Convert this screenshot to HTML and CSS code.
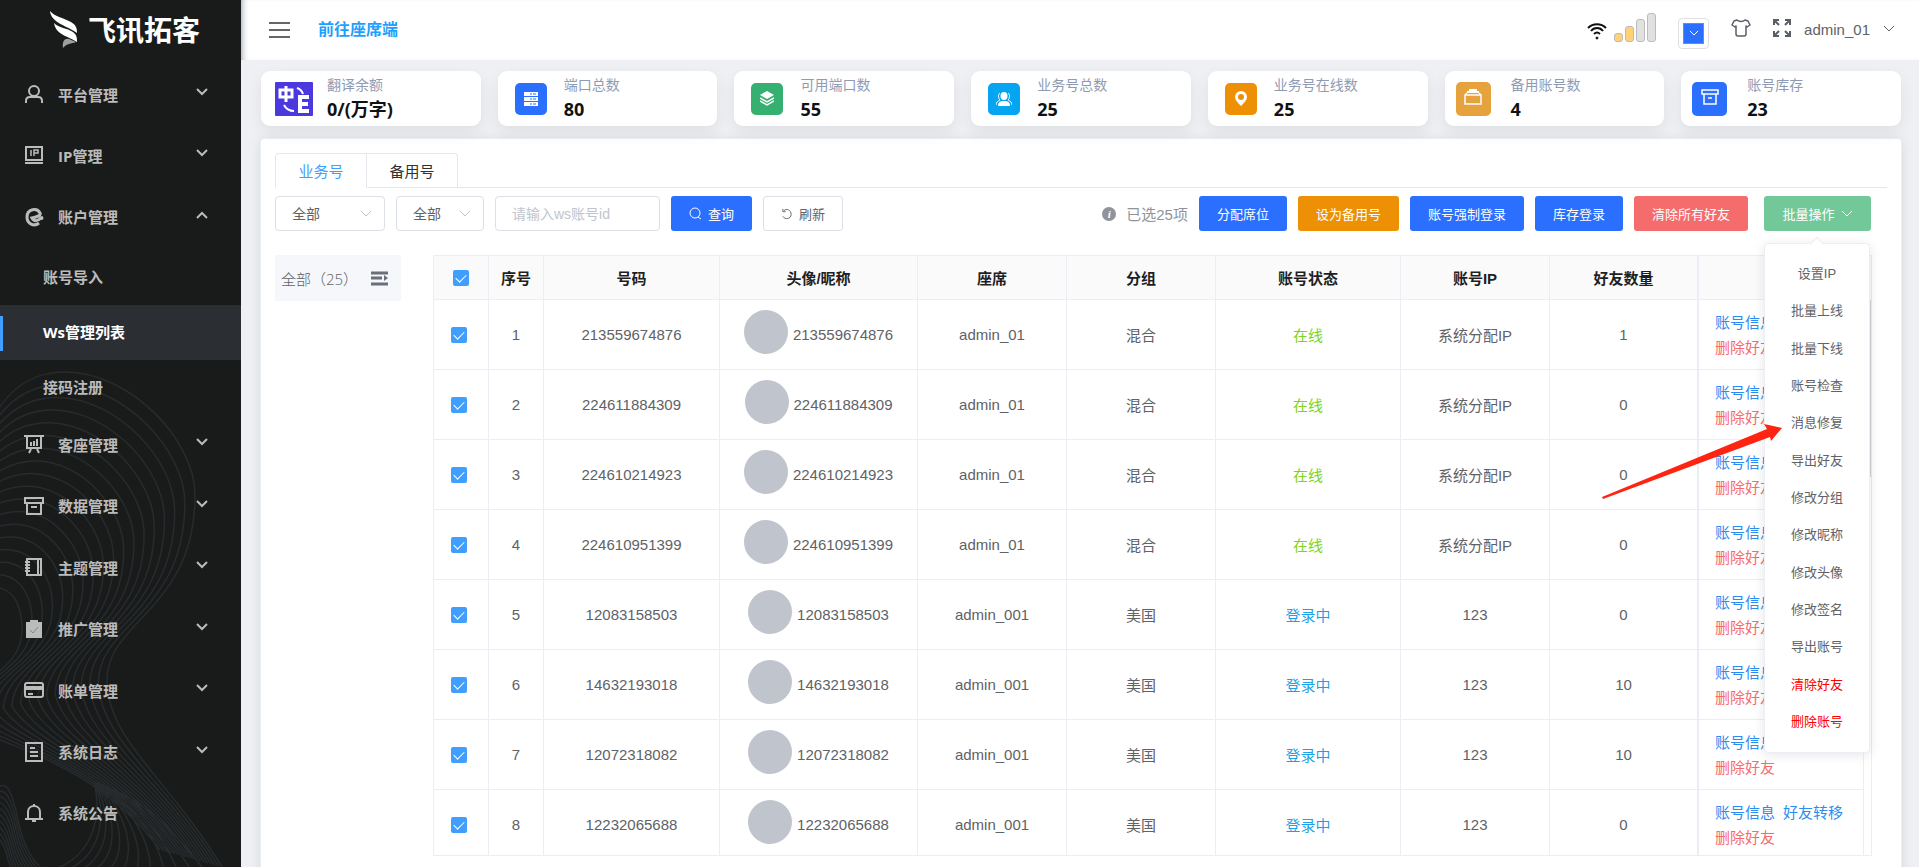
FILE: index.html
```html
<!DOCTYPE html>
<html lang="zh-CN">
<head>
    <meta charset="utf-8">
    <title>Ws管理列表</title>
    <link rel="stylesheet" href="styles.css">
</head>
<body>
    <div class="app">
        <aside class="sidebar">
            <svg class="waves" id="waves" viewBox="0 0 241 867" preserveAspectRatio="xMinYMax slice"></svg>
            <div class="logo">
                <svg width="30" height="38" viewBox="0 0 30 38">
                    <path d="M1 0 C6 6 15 7 22 11 C27 14 28 17 28 22 C19 15 2 12 1 0Z" fill="#fff"/>
                    <path d="M5 12 C10 17 18 17 24 21 C28 24 28 27 28 31 C19 25 7 24 5 12Z" fill="#fff"/>
                    <path d="M14 37 C13 30 16 27 20 28 L27 31 C22 33 18 32 14 37Z" fill="#9d9f9e"/>
                </svg>
                <span>飞讯拓客</span>
            </div>
            <ul class="menu">
                <li><a class="menu-item" href="#">
                    <svg class="icon" viewBox="0 0 20 20"><circle cx="10" cy="7" r="5"/><path d="M2 19v-2c0-3 2-4 4-4h8c2 0 4 1 4 4v2"/></svg>
                    <span>平台管理</span><svg class="arrow" viewBox="0 0 12 8"><path d="M1 1l5 5 5-5"/></svg></a></li>
                <li><a class="menu-item" href="#">
                    <svg class="icon" viewBox="0 0 20 20"><path d="M2 2h16v13H2zM1 18h18"/><path d="M7 5v6M10 11V5h4v3h-4" stroke-width="1.500"/></svg>
                    <span>IP管理</span><svg class="arrow" viewBox="0 0 12 8"><path d="M1 1l5 5 5-5"/></svg></a></li>
                <li class="open"><a class="menu-item" href="#">
                    <svg class="icon" viewBox="0 0 20 20"><path d="M15 16c-5 4-12 1-12-6 0-8 10-10 13-4 1 2-2 4-8 5 2 4 6 3 9 0" stroke-width="3"/><circle cx="17.500" cy="11" r="1"/></svg>
                    <span>账户管理</span><svg class="arrow" viewBox="0 0 12 8"><path d="M1 7l5-5 5 5"/></svg></a>
                    <ul class="submenu">
                        <li><a href="#">账号导入</a></li>
                        <li><a class="active" href="#">Ws管理列表</a></li>
                        <li><a href="#">接码注册</a></li>
                    </ul>
                </li>
                <li><a class="menu-item" href="#">
                    <svg class="icon" viewBox="0 0 20 20"><path d="M0 2h20M3 2v12h14V2M7 8v4M10 7v5M13 5v7M7 15l-2 4M13 15l2 4"/></svg>
                    <span>客座管理</span><svg class="arrow" viewBox="0 0 12 8"><path d="M1 1l5 5 5-5"/></svg></a></li>
                <li><a class="menu-item" href="#">
                    <svg class="icon" viewBox="0 0 20 20"><path d="M1 2h18v5H1zM3 7v11h14V7M7 11h6"/></svg>
                    <span>数据管理</span><svg class="arrow" viewBox="0 0 12 8"><path d="M1 1l5 5 5-5"/></svg></a></li>
                <li><a class="menu-item" href="#">
                    <svg class="icon" viewBox="0 0 20 20"><path d="M3 2h14v16H3zM14 2v16M1 5h5M1 8h5M1 11h5M1 14h5"/></svg>
                    <span>主题管理</span><svg class="arrow" viewBox="0 0 12 8"><path d="M1 1l5 5 5-5"/></svg></a></li>
                <li><a class="menu-item" href="#">
                    <svg class="icon" viewBox="0 0 20 20"><path d="M3 4h14v14H3zM7 2h6v2H7z" fill="#bbb"/><path d="M6 11l3 3 5-6" stroke="#888" stroke-width="1"/></svg>
                    <span>推广管理</span><svg class="arrow" viewBox="0 0 12 8"><path d="M1 1l5 5 5-5"/></svg></a></li>
                <li><a class="menu-item" href="#">
                    <svg class="icon" viewBox="0 0 20 20"><rect x="1" y="3" width="18" height="14" rx="2"/><path d="M2 7h16M2 9h16M4 14h5"/></svg>
                    <span>账单管理</span><svg class="arrow" viewBox="0 0 12 8"><path d="M1 1l5 5 5-5"/></svg></a></li>
                <li><a class="menu-item" href="#">
                    <svg class="icon" viewBox="0 0 20 20"><path d="M2 1h16v18H2zM6 6h5M6 10h8M6 14h8"/></svg>
                    <span>系统日志</span><svg class="arrow" viewBox="0 0 12 8"><path d="M1 1l5 5 5-5"/></svg></a></li>
                <li><a class="menu-item" href="#">
                    <svg class="icon" viewBox="0 0 20 20"><path d="M1 16h18M4 16V9c0-8 12-8 12 0v7M10 1v2M8 18h4"/></svg>
                    <span>系统公告</span></a></li>
            </ul>
        </aside>

        <div class="content">
            <header class="topbar">
                <button class="hamburger" aria-label="折叠菜单"><i></i><i></i><i></i></button>
                <a class="seat-link" href="#">前往座席端</a>
                <div class="topbar-right">
                    <svg class="wifi" width="20" height="18" viewBox="0 0 20 18" fill="none" stroke="#111" stroke-width="2"><path d="M1 6c5-5 13-5 18 0M4 9c3-4 9-4 12 0M7 12c2-2 4-2 6 0"/><circle cx="10" cy="16" r="1" fill="#111" stroke-width="1"/></svg>
                    <div class="signal"><i class="on"></i><i class="on"></i><i></i><i></i></div>
                    <button class="color-picker" aria-label="主题颜色"><span><svg width="10" height="6" viewBox="0 0 10 6"><path d="M1 1l4 4 4-4" fill="none" stroke="#fff"/></svg></span></button>
                    <svg class="shirt" width="20" height="18" viewBox="0 0 20 18" fill="none" stroke="#5a5e66" stroke-width="1.500" stroke-linejoin="round"><path d="M6 1c2 2 6 2 8 0l3 1 2 4-3 2-1-1v8c0 1-1 2-2 2H7c-1 0-2-1-2-2V7L4 8 1 6l2-4z"/></svg>
                    <svg class="full" width="18" height="18" viewBox="0 0 18 18" fill="none" stroke="#5a5e66" stroke-width="2"><path d="M1 6V1h5M1 1l5 5M12 1h5v5M17 1l-5 5M1 12v5h5M1 17l5-5M17 12v5h-5M17 17l-5-5"/></svg>
                    <a class="user" href="#">admin_01 <svg width="12" height="8" viewBox="0 0 12 8"><path d="M1 1l5 5 5-5" fill="none" stroke="#606266"/></svg></a>
                </div>
            </header>

            <main>
                <section class="stats">
                    <div class="stat">
                        <div class="stat-icon"><svg width="38" height="34" viewBox="0 0 38 34"><rect width="38" height="34" rx="1" fill="#4b38de"/><path d="M5 8h12v7H5zM11 4v16" fill="none" stroke="#fff" stroke-width="3"/><path d="M34 15H25v14h9M25 22h8" fill="none" stroke="#fff" stroke-width="4"/><path d="M22 6c3 1 5 3 6 6M9 23c2 4 6 6 10 6" fill="none" stroke="#fff" stroke-width="2"/></svg></div>
                        <div class="stat-text"><p>翻译余额</p><strong>0/(万字)</strong></div>
                    </div>
                    <div class="stat">
                        <div class="stat-icon"><span class="tile blue"><svg width="14" height="14" viewBox="0 0 14 14"><path d="M0 0h14v4H0zM0 5h14v4H0zM0 10h14v4H0z" fill="#fff"/><path d="M6 2h2M9 2h3M6 7h2M9 7h3M6 12h2M9 12h3" stroke="#2b6fff"/></svg></span></div>
                        <div class="stat-text"><p>端口总数</p><strong>80</strong></div>
                    </div>
                    <div class="stat">
                        <div class="stat-icon"><span class="tile green"><svg width="14" height="15" viewBox="0 0 14 15"><path d="M7 0l7 4-7 4-7-4z" fill="#fff"/><path d="M0 7l7 4 7-4M0 10l7 4 7-4" fill="none" stroke="#fff" stroke-width="1.500"/></svg></span></div>
                        <div class="stat-text"><p>可用端口数</p><strong>55</strong></div>
                    </div>
                    <div class="stat">
                        <div class="stat-icon"><span class="tile sky"><svg width="16" height="14" viewBox="0 0 16 14" fill="#fff"><ellipse cx="8" cy="4" rx="3.500" ry="4"/><path d="M2 14c0-4 2-5 6-5s6 1 6 5z"/><path d="M4 1C2 2 2 6 4 8c-2 1-4 2-4 5M12 1c2 1 2 5 0 7 2 1 4 2 4 5" fill="none" stroke="#fff"/></svg></span></div>
                        <div class="stat-text"><p>业务号总数</p><strong>25</strong></div>
                    </div>
                    <div class="stat">
                        <div class="stat-icon"><span class="tile orange"><svg width="12" height="15" viewBox="0 0 12 15"><path d="M6 15C3 12 0 9 0 6a6 6 0 0 1 12 0c0 3-3 6-6 9z" fill="#fff"/><circle cx="6" cy="6" r="3" fill="#ed9006"/></svg></span></div>
                        <div class="stat-text"><p>业务号在线数</p><strong>25</strong></div>
                    </div>
                    <div class="stat">
                        <div class="stat-icon start"><span class="tile amber wide"><svg width="18" height="18" viewBox="0 0 18 18" fill="none" stroke="#fff"><path d="M5 2h8M3 4h12" stroke-width="2"/><path d="M3 5L1 7v9h16V7l-2-2M1 7h16" stroke-width="1.500"/></svg></span></div>
                        <div class="stat-text"><p>备用账号数</p><strong>4</strong></div>
                    </div>
                    <div class="stat">
                        <div class="stat-icon start"><span class="tile blue wide"><svg width="18" height="18" viewBox="0 0 18 18" fill="none" stroke="#fff" stroke-width="1.500"><path d="M1 2h16v4H1zM3 6v10h12V6M7 10h4"/></svg></span></div>
                        <div class="stat-text"><p>账号库存</p><strong>23</strong></div>
                    </div>
                </section>

                <section class="panel">
                    <nav class="tabs">
                        <button class="tab active">业务号</button>
                        <button class="tab">备用号</button>
                    </nav>

                    <div class="toolbar">
                        <div class="select-box large">
                            <select aria-label="状态"><option>全部</option></select>
                            <svg width="12" height="8" viewBox="0 0 12 8"><path d="M1 1l5 5 5-5" fill="none" stroke="#c0c4cc"/></svg>
                        </div>
                        <div class="select-box">
                            <select aria-label="分组"><option>全部</option></select>
                            <svg width="12" height="8" viewBox="0 0 12 8"><path d="M1 1l5 5 5-5" fill="none" stroke="#c0c4cc"/></svg>
                        </div>
                        <input class="search" type="text" placeholder="请输入ws账号id" aria-label="ws账号id">
                        <button class="btn blue"><svg width="13" height="13" viewBox="0 0 13 13" fill="none" stroke="#fff"><circle cx="6" cy="6" r="5"/><path d="M9 10l3 2"/></svg>查询</button>
                        <button class="btn plain"><svg width="12" height="12" viewBox="0 0 13 13" fill="none" stroke="#606266"><path d="M3 3c3-3 8-1 8 4 0 5-7 6-9 2M2 1v3h3"/></svg>刷新</button>

                        <div class="actions">
                            <span class="selected"><i>i</i>已选25项</span>
                            <button class="btn blue">分配席位</button>
                            <button class="btn orange">设为备用号</button>
                            <button class="btn blue">账号强制登录</button>
                            <button class="btn blue">库存登录</button>
                            <button class="btn red">清除所有好友</button>
                            <div class="dropdown">
                                <button class="btn mint">批量操作<svg width="12" height="8" viewBox="0 0 12 8"><path d="M1 1l5 5 5-5" fill="none" stroke="#fff"/></svg></button>
                                <ul class="dropdown-menu">
                                    <li>设置IP</li>
                                    <li>批量上线</li>
                                    <li>批量下线</li>
                                    <li>账号检查</li>
                                    <li>消息修复</li>
                                    <li>导出好友</li>
                                    <li>修改分组</li>
                                    <li>修改昵称</li>
                                    <li>修改头像</li>
                                    <li>修改签名</li>
                                    <li>导出账号</li>
                                    <li class="danger">清除好友</li>
                                    <li class="danger">删除账号</li>
                                </ul>
                                <svg class="pointer" width="182" height="76" viewBox="0 0 182 76"><path d="M1 74L166 6L163 1L181 5L170 18L169 14L2 76z" fill="#ff2312"/></svg>
                            </div>
                        </div>
                    </div>

                    <div class="list">
                        <div class="groups">
                            <span>全部（25）</span>
                            <svg width="18" height="15" viewBox="0 0 18 15"><path d="M0 2h17M0 7h11M0 13h17" stroke="#6b6f78" stroke-width="3"/><path d="M13 4l4 3-4 3z" fill="#6b6f78"/></svg>
                        </div>
                        <div class="table-wrap">
                            <table>
                                <colgroup>
                                    <col class="c-check"><col class="c-index"><col class="c-number"><col class="c-nick"><col class="c-mid"><col class="c-mid"><col class="c-state"><col class="c-mid"><col class="c-mid"><col class="c-op"><col class="c-gutter">
                                </colgroup>
                                <thead>
                                    <tr>
                                        <th><input type="checkbox" checked aria-label="全选"></th>
                                        <th>序号</th><th>号码</th><th>头像/昵称</th><th>座席</th><th>分组</th><th>账号状态</th><th>账号IP</th><th class="before-op">好友数量</th><th colspan="2">操作</th>
                                    </tr>
                                </thead>
                                <tbody id="rows"></tbody>
                            </table>
                            <div class="scroll-thumb"></div>
                        </div>
                    </div>
                </section>
            </main>
        </div>
    </div>

    <script>
        const accounts = [
            ['213559674876', 'admin_01', '混合', '在线', '系统分配IP', 1],
            ['224611884309', 'admin_01', '混合', '在线', '系统分配IP', 0],
            ['224610214923', 'admin_01', '混合', '在线', '系统分配IP', 0],
            ['224610951399', 'admin_01', '混合', '在线', '系统分配IP', 0],
            ['12083158503', 'admin_001', '美国', '登录中', '123', 0],
            ['14632193018', 'admin_001', '美国', '登录中', '123', 10],
            ['12072318082', 'admin_001', '美国', '登录中', '123', 10],
            ['12232065688', 'admin_001', '美国', '登录中', '123', 0]
        ];

        document.getElementById('rows').innerHTML = accounts.map((a, i) => `
            <tr>
                <td class="check"><input type="checkbox" checked aria-label="选择 ${a[0]}"></td>
                <td>${i + 1}</td>
                <td>${a[0]}</td>
                <td><div class="nick"><span class="avatar"></span>${a[0]}</div></td>
                <td>${a[1]}</td>
                <td>${a[2]}</td>
                <td class="${a[3] === '在线' ? 'online' : 'pending'}">${a[3]}</td>
                <td>${a[4]}</td>
                <td class="before-op">${a[5]}</td>
                <td class="op"><a href="#">账号信息</a><a href="#">好友转移</a><br><a class="del" href="#">删除好友</a></td>
                ${i === 0 ? `<td class="gutter" rowspan="${accounts.length}"></td>` : ''}
            </tr>`).join('');

        // Each family is blended from one curve to the other
        // [from, to, lines]: first point, then three points per bezier segment
        const families = [
            [[-20, 450, 0, 385, 35, 372, 65, 372, 130, 372, 195, 440, 195, 495, 195, 610, 107, 620, 107, 680, 107, 740, 170, 780, 222, 867],
             [-60, 600, -30, 588, -10, 586, 0, 588, 14, 592, 22, 605, 22, 630, 22, 675, -35, 680, -40, 720, -10, 745, 90, 755, 160, 850], 18],
            [[94, 782, 101, 810, 97, 850, 60, 867, 55, 870, 50, 870, 45, 867],
             [94, 782, 150, 800, 180, 840, 202, 867, 205, 870, 208, 874, 210, 880], 12],
            [[-5, 790, 8, 775, 14, 800, 18, 820, 24, 850, 36, 865, 44, 870],
             [-30, 850, -8, 820, 4, 840, 8, 860, 10, 865, 12, 870, 14, 880], 10]
        ];
        let d = '';
        families.forEach(([from, to, lines]) => {
            for (let n = 0; n < lines; n++) {
                const p = from.map((v, k) => v + (to[k] - v) * n / (lines - 1));
                d += `M${p[0]} ${p[1]}`;
                for (let k = 2; k < p.length; k += 6) d += 'C' + p.slice(k, k + 6).join(' ');
            }
        });
        document.getElementById('waves').innerHTML = `<path d="${d}"/>`;
    </script>
</body>
</html>
```

FILE: styles.css
```css
* {
    box-sizing: border-box;
}

body {
    margin: 0;
    font-family: "Liberation Sans", "Noto Sans CJK SC", sans-serif;
    font-size: 15px;
    color: #606266;
    background-color: #eff0f4;
}

ul {
    list-style: none;
    margin: 0;
    padding: 0;
}

a {
    text-decoration: none;
    color: inherit;
}

button, input, select {
    font-family: inherit;
    margin: 0;
}

svg {
    flex: none;
}

.app {
    display: flex;
    height: 100vh;
    overflow: hidden;
}

/* sidebar */
.sidebar {
    position: relative;
    display: flex;
    flex-direction: column;
    flex: none;
    width: 241px;
    background-color: #191b1a;
    font-family: "Open Sans", "Noto Sans CJK SC", sans-serif;
    font-weight: bold;
    color: #bbb;
}

.waves {
    position: absolute;
    left: 0;
    top: 0;
    width: 100%;
    height: 100%;
    fill: none;
    stroke: #272b2e;
    stroke-width: 1.5;
}

.logo {
    display: flex;
    align-items: center;
    gap: 9px;
    height: 60px;
    padding-left: 49px;
    font-size: 28px;
    line-height: 40px;
    color: #fff;
}

.menu {
    position: relative;
    flex: 1;
    display: flex;
    flex-direction: column;
    justify-content: space-between;
    padding: 6px 0 26px;
}

.menu-item {
    display: flex;
    align-items: center;
    height: 56px;
    padding: 0 33px 0 24px;
}

.menu-item span {
    flex: 1;
    margin-left: 14px;
}

.icon {
    width: 20px;
    height: 20px;
    fill: none;
    stroke: #bbb;
    stroke-width: 2;
}

.arrow {
    width: 12px;
    height: 8px;
    margin-bottom: 4px;
    fill: none;
    stroke: #bbb;
    stroke-width: 2;
}

.submenu {
    margin-bottom: -4px;
    padding-top: 5px;
}

.submenu a {
    position: relative;
    display: block;
    padding-left: 43px;
    line-height: 55px;
}

.submenu .active {
    background-color: #2b2e33;
    color: #fff;
}

.submenu .active::before {
    content: "";
    position: absolute;
    left: 0;
    top: 11px;
    width: 3px;
    height: 35px;
    background-color: #409eff;
}

/* top bar */
.content {
    flex: 1;
    min-width: 0;
}

.topbar {
    display: flex;
    align-items: center;
    height: 60px;
    padding: 0 24px 0 28px;
    background-color: #fff;
    box-shadow: inset 6px 0 6px -5px rgba(0, 21, 41, 0.4);
}

.hamburger {
    display: flex;
    flex-direction: column;
    justify-content: space-between;
    width: 21px;
    height: 16px;
    margin-right: 28px;
    padding: 0;
    border: none;
    background: none;
}

.hamburger i {
    width: 100%;
    height: 2px;
    background-color: #666;
}

.seat-link {
    padding-bottom: 4px;
    font-size: 16px;
    font-weight: bold;
    color: #1e9fff;
}

.topbar-right {
    display: flex;
    align-items: center;
    margin-left: auto;
}

.wifi {
    margin: 2px 7px 0 0;
}

.signal {
    display: flex;
    align-items: flex-end;
    gap: 2px;
    margin: 0 22px 6px 0;
}

.signal i {
    width: 9px;
    height: 9px;
    border: 1px solid #bbb;
    border-radius: 3px;
    background-color: #e1e1e1;
}

.signal i:nth-child(2) { height: 16px; }
.signal i:nth-child(3) { height: 23px; }
.signal i:nth-child(4) { height: 29px; }

.signal .on {
    background-color: #ffd27a;
}

.color-picker {
    width: 31px;
    height: 31px;
    margin: 6px 22px 0 0;
    padding: 4px;
    border: 1px solid #e0e0e0;
    border-radius: 4px;
    background-color: #fff;
}

.color-picker span {
    display: flex;
    align-items: center;
    justify-content: center;
    height: 100%;
    border: 1px solid #8a8a8a;
    background-color: #2b6fff;
}

.shirt {
    margin: 0 22px 4px 0;
}

.full {
    margin: 0 13px 4px 0;
}

.user {
    display: flex;
    align-items: center;
    gap: 13px;
    padding-bottom: 2px;
}

/* statistics */
main {
    padding: 11px 17px 0 19px;
}

.stats {
    display: grid;
    grid-template-columns: repeat(7, 1fr);
    gap: 17px;
    padding: 0 1px;
}

.stat {
    display: flex;
    height: 55px;
    border-radius: 9px;
    background-color: #fff;
    box-shadow: 0 6px 16px rgba(0, 0, 0, 0.07);
}

.stat-icon {
    display: flex;
    align-items: center;
    justify-content: center;
    width: 66px;
}

.stat-icon.start {
    justify-content: flex-start;
    padding-left: 11px;
}

.tile {
    display: flex;
    align-items: center;
    justify-content: center;
    width: 32px;
    height: 32px;
    border-radius: 5px;
}

.tile.wide {
    width: 35px;
    height: 34px;
    padding-bottom: 4px;
}

.blue { background-color: #2b6fff; }
.green { background-color: #35b070; }
.sky { background-color: #05a5f2; }
.orange { background-color: #ed9006; }
.amber { background-color: #e6a23c; }
.red { background-color: #f56c6c; }
.mint { background-color: #72c899; }

.stat-text p {
    margin: 3px 0 0;
    font-size: 14px;
    line-height: 22px;
    color: #8f9bb3;
}

.stat-text strong {
    display: block;
    font-family: "Open Sans", "Noto Sans CJK SC", sans-serif;
    font-size: 18px;
    line-height: 26px;
    color: #111;
}

/* main panel */
.panel {
    height: 760px;
    margin-top: 12px;
    padding: 14px;
    border: 1px solid #ebeef5;
    border-radius: 4px;
    background-color: #fff;
    box-shadow: 0 2px 12px rgba(0, 0, 0, 0.1);
}

.tabs {
    display: flex;
    border-bottom: 1px solid #e4e7ed;
}

.tab {
    width: 91px;
    height: 35px;
    margin-bottom: -1px;
    border: 1px solid #e4e7ed;
    border-left: none;
    background-color: #fff;
    font-size: 15px;
    color: #303133;
}

.tab:first-child {
    width: 92px;
    border-left: 1px solid #e4e7ed;
    border-radius: 4px 0 0 0;
}

.tab:last-child {
    border-radius: 0 4px 0 0;
}

.tab.active {
    border-bottom-color: #fff;
    color: #409eff;
}

.toolbar {
    display: flex;
    align-items: center;
    gap: 11px;
    margin-top: 8px;
}

.select-box {
    position: relative;
    width: 88px;
}

.select-box.large {
    width: 110px;
}

.select-box select {
    appearance: none;
    width: 100%;
    height: 35px;
    padding: 0 16px;
    border: 1px solid #dcdfe6;
    border-radius: 4px;
    background-color: #fff;
    font-size: 14px;
    color: #606266;
}

.select-box svg {
    position: absolute;
    right: 13px;
    top: 14px;
    pointer-events: none;
}

.search {
    width: 165px;
    height: 35px;
    padding: 0 16px;
    border: 1px solid #dcdfe6;
    border-radius: 4px;
    font-size: 14px;
}

.search::placeholder {
    color: #c0c4cc;
}

.btn {
    display: flex;
    align-items: center;
    justify-content: center;
    gap: 6px;
    height: 35px;
    padding: 0 18px;
    border: none;
    border-radius: 3px;
    font-size: 13px;
    white-space: nowrap;
    color: #fff;
}

.btn.plain {
    padding: 0 17px;
    border: 1px solid #dcdfe6;
    background-color: #fff;
    color: #606266;
}

.actions {
    display: flex;
    align-items: center;
    gap: 11px;
    margin: 0 16px 0 auto;
}

.selected {
    display: flex;
    align-items: center;
    gap: 10px;
    color: #909399;
}

.selected i {
    width: 14px;
    height: 14px;
    border-radius: 7px;
    background-color: #909399;
    font: italic bold 11px/14px "Liberation Serif", serif;
    text-align: center;
    color: #fff;
}

.dropdown {
    position: relative;
    margin-left: 5px;
}

.dropdown .btn {
    width: 107px;
}

.dropdown-menu {
    position: absolute;
    z-index: 2;
    left: 0;
    top: 47px;
    display: flex;
    flex-direction: column;
    width: 106px;
    height: 510px;
    padding: 10px 0 13px;
    border: 1px solid #ebeef5;
    border-radius: 4px;
    background-color: #fff;
    box-shadow: 0 2px 12px rgba(0, 0, 0, 0.1);
    font-size: 13px;
    text-align: center;
}

.dropdown-menu::before {
    content: "";
    position: absolute;
    left: 47px;
    top: -5px;
    width: 9px;
    height: 9px;
    border: 1px solid #ebeef5;
    border-right: none;
    border-bottom: none;
    background-color: #fff;
    transform: rotate(45deg);
}

.dropdown-menu li {
    flex: 1;
    display: flex;
    align-items: center;
    justify-content: center;
}

.dropdown-menu .danger {
    color: #f00;
}

.pointer {
    position: absolute;
    z-index: 3;
    right: 88px;
    top: 227px;
}

/* account list */
.list {
    display: flex;
    align-items: flex-start;
    gap: 32px;
    margin: 24px 15px 0 0;
}

.groups {
    display: flex;
    align-items: center;
    justify-content: space-between;
    width: 126px;
    height: 46px;
    padding: 0 12px 0 6px;
    background-color: #f5f7fa;
    font-family: "Open Sans", "Noto Sans CJK SC", sans-serif;
    font-weight: 300;
    white-space: nowrap;
}

.table-wrap {
    position: relative;
    flex: 1;
    height: 601px;
    overflow: hidden;
    border: 1px solid #ebeef5;
}

table {
    width: 100%;
    table-layout: fixed;
    border-collapse: separate;
    border-spacing: 0;
    text-align: center;
}

.c-check, .c-index { width: 55px; }
.c-number { width: 176px; }
.c-nick { width: 198px; }
.c-mid { width: 149px; }
.c-state { width: 185px; }
.c-op { width: 165px; }
.c-gutter { width: 8px; }

th, td {
    padding: 0;
    border-right: 1px solid #ebeef5;
    border-bottom: 1px solid #ebeef5;
}

th {
    height: 44px;
    background-color: #fafafa;
    color: #1f1f1f;
}

td {
    height: 70px;
}

th:last-child, .gutter {
    border-right: none;
}

.check {
    padding-right: 4px;
}

.before-op {
    border-right-width: 2px;
}

.nick {
    display: flex;
    align-items: center;
    justify-content: center;
    gap: 5px;
}

.avatar {
    width: 44px;
    height: 44px;
    margin-bottom: 6px;
    border-radius: 50%;
    background-color: #c0c4cc;
}

.online {
    color: #7ed321;
}

.pending {
    color: #1e9fe8;
}

.op {
    padding-left: 16px;
    text-align: left;
    line-height: 25px;
    color: #2d8cf0;
}

.op a {
    margin-right: 8px;
}

.op .del {
    color: #f56c6c;
}

input[type="checkbox"] {
    appearance: none;
    display: block;
    width: 16px;
    height: 16px;
    margin: 0 auto;
    padding: 2px 0 0 5px;
    border-radius: 2px;
    background-color: #409eff;
}

input[type="checkbox"]::before {
    content: "";
    display: block;
    width: 5px;
    height: 9px;
    border: 1px solid #fff;
    border-top: none;
    border-left: none;
    transform: rotate(45deg);
}

.scroll-thumb {
    position: absolute;
    right: 0;
    top: 44px;
    width: 2px;
    height: 177px;
    background-color: #d3d6db;
}
```
